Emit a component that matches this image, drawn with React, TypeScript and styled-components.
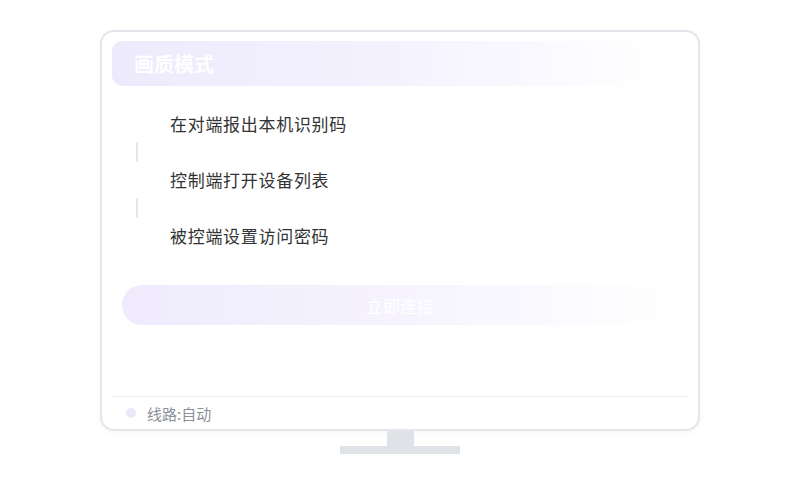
import React from "react";
import styled, { createGlobalStyle } from "styled-components";

const Global = createGlobalStyle`
  html, body { margin: 0; padding: 0; background: #ffffff; }
  body { font-family: "Noto Sans CJK SC", "Noto Sans", sans-serif; }
`;

const Page = styled.div`
  width: 800px;
  height: 500px;
  display: flex;
  flex-direction: column;
  align-items: center;
  padding-top: 30px;
  box-sizing: border-box;
`;

const Monitor = styled.div`
  width: 600px;
  height: 401px;
  box-sizing: border-box;
  border: 2px solid #e3e6eb;
  border-radius: 14px;
  background: #fff;
  padding: 9px 10px 0;
  display: flex;
  flex-direction: column;
  box-shadow: 0 2px 6px rgba(40, 50, 80, 0.04);
`;

const Header = styled.div`
  height: 45px;
  border-radius: 10px;
  background: linear-gradient(90deg, #eeeafd 0%, #f4f1fe 45%, rgba(255,255,255,0) 96%);
  display: flex;
  align-items: center;
  padding-left: 22px;
  color: #ffffff;
  font-size: 20px;
  font-weight: 700;
`;

const Steps = styled.div`
  margin-top: 27px;
  display: flex;
  flex-direction: column;
`;

const Step = styled.div`
  height: 22px;
  line-height: 22px;
  padding-left: 58px;
  font-size: 17px;
  font-weight: 400;
  letter-spacing: 0.7px;
  color: #333333;
`;

const Connector = styled.div`
  width: 2px;
  height: 20px;
  margin: 7px 0 7px 24px;
  background: #e4e7ec;
  border-radius: 1px;
`;

const ConnectButton = styled.div`
  margin: 38px 10px 0;
  height: 40px;
  border-radius: 20px;
  background: linear-gradient(90deg, #efebfd 0%, #f6f3fe 50%, rgba(255,255,255,0) 100%);
  display: flex;
  align-items: center;
  justify-content: center;
  color: #ffffff;
  font-size: 17px;
`;

const Spacer = styled.div`
  flex: 1;
`;

const Footer = styled.div`
  border-top: 1px solid #eef0f3;
  height: 32px;
  display: flex;
  align-items: center;
  padding-left: 14px;
  gap: 11px;
  font-size: 15px;
  font-weight: 400;
  color: #8c9099;
`;

const Dot = styled.span`
  width: 10px;
  height: 10px;
  border-radius: 50%;
  background: #ece8fb;
`;

const Neck = styled.div`
  width: 27px;
  height: 15px;
  background: #dfe3e8;
`;

const Base = styled.div`
  width: 120px;
  height: 8px;
  background: #dfe3e8;
`;

const steps = ["在对端报出本机识别码", "控制端打开设备列表", "被控端设置访问密码"];

export default function App() {
  return (
    <>
      <Global />
      <Page>
        <Monitor>
          <Header>画质模式</Header>
          <Steps>
            {steps.map((s, i) => (
              <React.Fragment key={s}>
                {i > 0 && <Connector />}
                <Step>{s}</Step>
              </React.Fragment>
            ))}
          </Steps>
          <ConnectButton>立即连接</ConnectButton>
          <Spacer />
          <Footer>
            <Dot />
            <span>线路:自动</span>
          </Footer>
        </Monitor>
        <Neck />
        <Base />
      </Page>
    </>
  );
}
